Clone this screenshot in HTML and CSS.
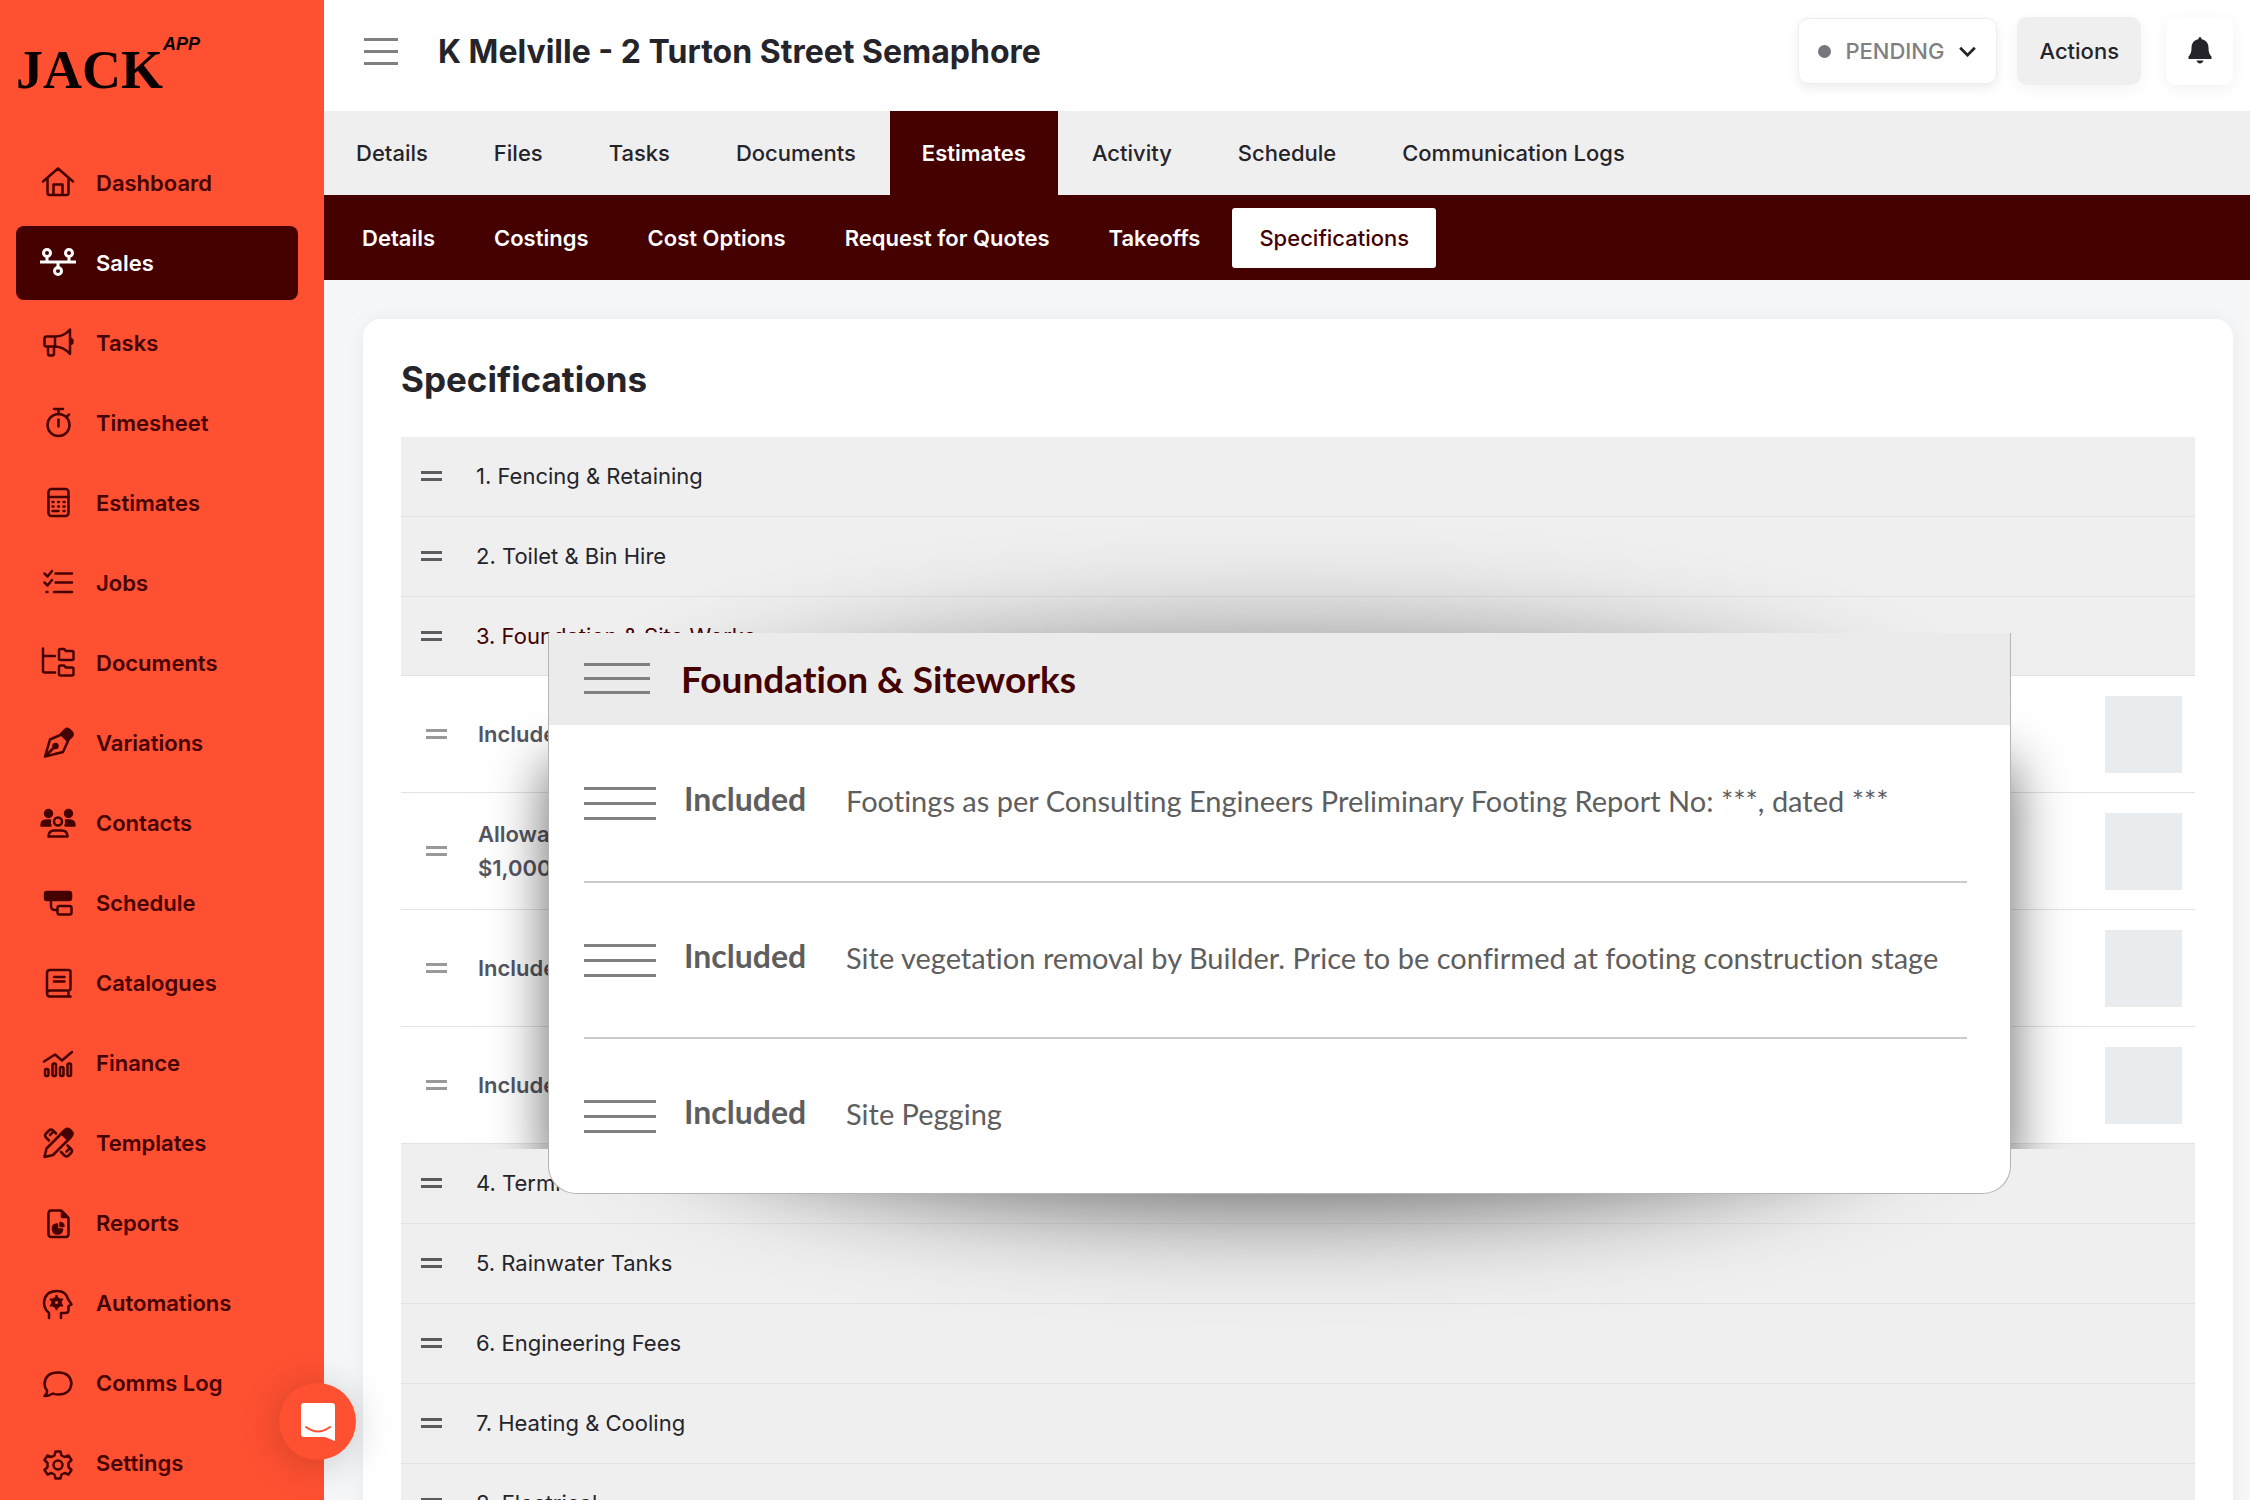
FILE: index.html
```html
<!DOCTYPE html>
<html lang="en">
  <head>
    <meta charset="UTF-8" />
    <meta name="viewport" content="width=device-width, initial-scale=1.0" />
    <title>K Melville - 2 Turton Street Semaphore</title>
    <link rel="stylesheet" href="styles.css">
  </head>
  <body>
    <div class="app">
      <aside class="sidebar">
        <a class="logo" href="#">JACK<span class="logo-app">APP</span></a>
        <nav class="side-nav">
          <a href="#">
            <svg viewBox="0 0 36 36"><path d="M3 16.5 18 3.5l15 13M7.5 13.5V28q0 2 2 2h17q2 0 2-2V13.500M13.500 30V19.500h9V30" /></svg>
            Dashboard
          </a>
          <a class="active" href="#">
            <svg viewBox="0 0 36 36"><path d="M0 17h36M7 12v5M29 12v5M18 17v6" /><circle cx="7" cy="8" r="3.500" /><circle cx="29" cy="8" r="3.500" /><circle cx="18" cy="26" r="3.500" /></svg>
            Sales
          </a>
          <a href="#">
            <svg viewBox="0 0 36 36"><path d="M15 11.500H6.500q-2 0-2 2v6q0 2 2 2H15zM15 11.500q9 0 15-7v24.500q-6-7-15-7.500M8 21.500v7q0 2 2 2h2q2 0 2-2v-7M30 14q2.500 0 2.500 2.500T30 19" /></svg>
            Tasks
          </a>
          <a href="#">
            <svg viewBox="0 0 36 36"><circle cx="18.500" cy="20" r="11" /><path d="M14 4h9M18.500 4v5M18.500 14.500v7M26.500 12l2.500-2.500" /></svg>
            Timesheet
          </a>
          <a href="#">
            <svg viewBox="0 0 36 36"><rect x="8.500" y="4" width="20" height="27" rx="3" /><path d="M8.500 12h20M12.500 17h1M18 17h1M23.500 17h1M12.500 21.500h1M18 21.500h1M23.500 21.500h1M12.500 26h6M23.500 26h1" /></svg>
            Estimates
          </a>
          <a href="#">
            <svg viewBox="0 0 36 36"><path d="m4.500 8.500 3 3L12 6M4.500 17.500l3 3L12 15M15.500 8.500H32M15.500 17.500H32M14 27h18M6.500 27h1" /></svg>
            Jobs
          </a>
          <a href="#">
            <svg viewBox="0 0 36 36"><path d="M3 3.500V26q0 1.500 1.500 1.500H15M3 11h12M19 5.500q0-1.500 1.500-1.500h3.500l2 2h6q1.500 0 1.500 1.500v6q0 1.500-1.500 1.500H20.500q-1.500 0-1.500-1.500zM19 22q0-1.500 1.500-1.500h3.500l2 2h6q1.500 0 1.500 1.500v5q0 1.500-1.500 1.500H20.500q-1.500 0-1.500-1.500z" /></svg>
            Documents
          </a>
          <a href="#">
            <svg viewBox="0 0 36 36"><path d="M5 31.500 10 14.500l11.500-5 6.500 6.500-5 11zM5 31.500l9-9" /><circle class="fill" cx="15.500" cy="21" r="2" /><path class="fill" d="m21.500 8.500 4-4q2-1.500 4 .5l2 2q2 2 .5 4l-4 4z" /></svg>
            Variations
          </a>
          <a href="#">
            <svg viewBox="0 0 36 36"><circle class="fill" cx="8.500" cy="8.500" r="3.500" /><circle class="fill" cx="28.500" cy="8.500" r="3.500" /><path class="fill" d="M1.500 20.500q0-5 5-5H10q-1 3 .5 5zM34.500 20.500q0-5-5-5H26q1 3-.5 5z" /><circle cx="18" cy="16.500" r="4" /><path d="M8.500 31.500q0-6 6-6h7q6 0 6 6z" /></svg>
            Contacts
          </a>
          <a href="#">
            <svg viewBox="0 0 36 36"><rect class="fill" x="5" y="7" width="26" height="8" rx="2" /><path d="M11 15v6q0 4 4 4h2" /><rect x="17.500" y="21" width="14" height="8.500" rx="2" /></svg>
            Schedule
          </a>
          <a href="#">
            <svg viewBox="0 0 36 36"><path d="M30.500 31.500H10q-3 0-3-3V8q0-3 3-3h18.500q2 0 2 2v16.500q0 2-2 2H10q-3 0-3 3M28.500 25.500v6M14 12h10.500M14 16.500h10.500" /></svg>
            Catalogues
          </a>
          <a href="#">
            <svg viewBox="0 0 36 36"><path d="M4 16.500 15 9.500l7 6L32 7" /><rect x="5" y="24" width="3.500" height="7" rx="1.500" /><rect x="12.500" y="18.500" width="3.500" height="12.500" rx="1.500" /><rect x="20" y="22" width="3.500" height="9" rx="1.500" /><rect x="27.500" y="18.500" width="3.500" height="12.500" rx="1.500" /></svg>
            Finance
          </a>
          <a href="#">
            <svg viewBox="0 0 36 36"><path d="m4.500 32 2-8.500L24 6l6.500 6.500L13 30zM9 15.500l-3-3q-2-2 0-4L9 5.500q2-2 4 0L16 8.500M10 10l2.500-2.500M21 27l3.500 3.500q2 2 4 0l2.500-2.500q2-2 0-4L27.500 20.500M26.500 26.500l2.500-2.500" /><path class="fill" d="m21.500 8.500 4-4q2-1.500 4 0l2 2q2 2 .5 4l-4 4z" /></svg>
            Templates
          </a>
          <a href="#">
            <svg viewBox="0 0 36 36"><path d="M11.500 5.500H21l7.500 7.500v16q0 3-3 3h-14q-3 0-3-3v-20.500q0-3 3-3z" /><path class="fill" d="M22 6.500v5.500h5.500zM17 19.500v5h5q-.5 4-4.500 4t-4.500-4.500 4-4.500zM20.500 18q2.500.5 3 3h-3z" /></svg>
            Reports
          </a>
          <a href="#">
            <svg viewBox="0 0 36 36"><path d="M9 33v-5q-5-4-5-10.500Q5 6 17 6q9 0 11 8l3.500 5.500-3 1.500v4q0 3-3 3H21v5" /><circle class="thick" cx="16.500" cy="17.500" r="3.500" /><path d="M16.500 11v2.500M16.500 21.500V24M11 14.500l2 1M20 19.500l2 1M11 20.500l2-1M20 15.500l2-1" /></svg>
            Automations
          </a>
          <a href="#">
            <svg viewBox="0 0 36 36"><path d="M4.500 31q3-2.500 2.500-5.500-2.500-3-2.500-7Q5.500 7.500 18 7.500t13.500 11q-1 11-13.500 11-3 0-5-1-4 2.500-8.500 2.500z" /></svg>
            Comms Log
          </a>
          <a href="#">
            <svg viewBox="0 0 36 36"><path d="M15.500 6.500h5l1 4 3 1.500 4-1.500 3 4.500-3 3v4l3 3-3 4.500-4-1.500-3 1.500-1 4h-5l-1-4-3-1.500-4 1.500-3-4.500 3-3v-4l-3-3 3-4.500 4 1.500 3-1.500z" /><circle cx="18" cy="20" r="4.500" /></svg>
            Settings
          </a>
        </nav>
      </aside>

      <main class="main">
        <header class="topbar">
          <button class="menu-btn" aria-label="Toggle menu"><span class="bars"></span></button>
          <h1>K Melville - 2 Turton Street Semaphore</h1>
          <div class="topbar-actions">
            <label class="status">
              <span class="dot"></span>
              <select aria-label="Status">
                <option>PENDING</option>
              </select>
              <svg class="chevron" viewBox="0 0 20 12"><path d="m2 2 8 8 8-8" /></svg>
            </label>
            <button class="actions-btn">Actions</button>
            <button class="bell-btn" aria-label="Notifications">
              <svg viewBox="0 0 24 28"><path d="M12 0q1.500 0 1.500 2 7 1.500 7 9 0 6 3 8.500v2.500H.5v-2.500q3-2.500 3-8.500 0-7.500 7-9 0-2 1.500-2zM8.500 23.500h7q-1 3-3.500 3t-3.500-3z" /></svg>
            </button>
          </div>
        </header>

        <nav class="tabs">
          <a href="#">Details</a>
          <a href="#">Files</a>
          <a href="#">Tasks</a>
          <a href="#">Documents</a>
          <a class="active" href="#">Estimates</a>
          <a href="#">Activity</a>
          <a href="#">Schedule</a>
          <a href="#">Communication Logs</a>
        </nav>
        <nav class="sub-tabs">
          <a href="#">Details</a>
          <a href="#">Costings</a>
          <a href="#">Cost Options</a>
          <a href="#">Request for Quotes</a>
          <a href="#">Takeoffs</a>
          <a class="active" href="#">Specifications</a>
        </nav>

        <section class="card">
          <h2>Specifications</h2>
          <div class="spec-list">
            <div class="group"><span class="handle"></span>1. Fencing &amp; Retaining</div>
            <div class="group"><span class="handle"></span>2. Toilet &amp; Bin Hire</div>
            <div class="group open"><span class="handle"></span>3. Foundation &amp; Site Works</div>
            <div class="item"><span class="handle"></span><p>Included</p><span class="thumb"></span></div>
            <div class="item"><span class="handle"></span><p>Allowance<br>$1,000</p><span class="thumb"></span></div>
            <div class="item"><span class="handle"></span><p>Included</p><span class="thumb"></span></div>
            <div class="item"><span class="handle"></span><p>Included</p><span class="thumb"></span></div>
            <div class="group"><span class="handle"></span>4. Termite</div>
            <div class="group"><span class="handle"></span>5. Rainwater Tanks</div>
            <div class="group"><span class="handle"></span>6. Engineering Fees</div>
            <div class="group"><span class="handle"></span>7. Heating &amp; Cooling</div>
            <div class="group"><span class="handle"></span>8. Electrical</div>

            <!-- enlarged view of group 3 -->
            <div class="popout">
              <div class="shadow-top"></div>
              <div class="shadow-bottom"></div>
              <div class="shadow-sides"></div>
              <div class="popout-body">
                <h3><span class="bars wide"></span>Foundation &amp; Siteworks</h3>
                <div class="popout-row">
                  <span class="bars wider"></span>
                  <strong>Included</strong>
                  <p>Footings as per Consulting Engineers Preliminary Footing Report No: ***, dated ***</p>
                </div>
                <div class="popout-row">
                  <span class="bars wider"></span>
                  <strong>Included</strong>
                  <p>Site vegetation removal by Builder. Price to be confirmed at footing construction stage</p>
                </div>
                <div class="popout-row">
                  <span class="bars wider"></span>
                  <strong>Included</strong>
                  <p>Site Pegging</p>
                </div>
              </div>
            </div>
          </div>
        </section>
      </main>

      <button class="chat" aria-label="Open chat">
        <svg viewBox="0 0 36 40"><path class="bubble" d="M4 1h28q3 0 3 3v35l-10-4H4q-3 0-3-3V4q0-3 3-3z" /><path class="smile" d="M6 25q12 9 24 0" /></svg>
      </button>
    </div>
  </body>
</html>
```
FILE: styles.css
```css
*,
*::before,
*::after {
  box-sizing: border-box;
}

:root {
  --orange: #ff5032;
  --maroon: #450000;
  --grey: #efefef;
  --line: #dfe3e8;
  --text: #25242a;
}

body {
  margin: 0;
  font-family: Inter, "Liberation Sans", sans-serif;
  font-size: 22px;
  color: var(--text);
}

h1,
h2,
h3,
p {
  margin: 0;
}

a {
  color: inherit;
  text-decoration: none;
}

button,
select {
  border: 0;
  padding: 0;
  font: inherit;
  color: inherit;
  background: none;
}

.app {
  display: flex;
  height: 100vh;
  overflow: hidden;
}

/* sidebar */
.sidebar {
  flex: 0 0 324px;
  background: var(--orange);
  color: var(--maroon);
}

.logo {
  display: flex;
  align-items: flex-start;
  height: 146px;
  padding: 32px 16px 0;
  font-family: "Liberation Serif", serif;
  font-size: 54px;
  line-height: 76px;
  font-weight: 700;
  color: #0a0000;
}

.logo-app {
  font-family: "Liberation Sans Narrow", "Liberation Sans", sans-serif;
  font-size: 18px;
  line-height: 24px;
  font-style: italic;
}

.side-nav {
  display: flex;
  flex-direction: column;
  gap: 6px;
  padding: 0 26px 0 16px;
}

.side-nav a {
  display: flex;
  align-items: center;
  gap: 20px;
  height: 74px;
  padding-left: 24px;
  border-radius: 8px;
  font-weight: 600;
}

.side-nav .active {
  background: var(--maroon);
  color: #fff;
}

.side-nav svg {
  width: 36px;
  height: 36px;
  fill: none;
  stroke: currentColor;
  stroke-width: 2.5;
  stroke-linecap: round;
  stroke-linejoin: round;
}

.side-nav .active svg {
  stroke-width: 3;
}

.side-nav svg .fill {
  fill: currentColor;
}

.side-nav svg .thick {
  stroke-width: 4;
}

/* top bar */
.main {
  flex: 1;
  min-width: 0;
  background: #f6f7f9;
}

.topbar {
  display: flex;
  align-items: center;
  gap: 40px;
  height: 111px;
  padding: 0 17px 9px 40px;
  background: #fff;
}

.topbar h1 {
  flex: 1;
  font-size: 32px;
  font-weight: 700;
}

.bars {
  display: block;
  width: 34px;
  height: 27px;
  border-top: 3px solid #808080;
  border-bottom: 3px solid #808080;
  background: linear-gradient(#808080, #808080) center / 100% 3px no-repeat;
}

.topbar-actions {
  display: flex;
  align-items: center;
}

.status {
  display: flex;
  align-items: center;
  gap: 14px;
  height: 66px;
  margin-right: 20px;
  padding: 0 19px;
  border: 1px solid #ededed;
  border-radius: 10px;
  box-shadow: 0 4px 12px rgba(0, 0, 0, 0.08);
}

.status select {
  appearance: none;
  color: #808080;
  font-weight: 500;
}

.dot {
  width: 13px;
  height: 13px;
  border-radius: 50%;
  background: #77767c;
}

.chevron {
  width: 19px;
  height: 11px;
  fill: none;
  stroke: var(--text);
  stroke-width: 3;
}

.actions-btn {
  height: 68px;
  margin-right: 25px;
  padding: 0 22px;
  border-radius: 10px;
  background: var(--grey);
  font-weight: 500;
  box-shadow: 0 4px 16px rgba(0, 0, 0, 0.05);
}

.bell-btn {
  display: flex;
  align-items: center;
  justify-content: center;
  width: 67px;
  height: 68px;
  border-radius: 10px;
  box-shadow: 0 4px 16px rgba(0, 0, 0, 0.06);
}

.bell-btn svg {
  width: 24px;
  height: 28px;
  fill: var(--text);
}

/* tabs */
.tabs {
  display: flex;
  gap: 2px;
  height: 84px;
  background: var(--grey);
  font-weight: 500;
}

.tabs a {
  display: flex;
  align-items: center;
  padding: 0 32px;
}

.tabs .active {
  background: var(--maroon);
  color: #fff;
  font-weight: 600;
}

.sub-tabs {
  display: flex;
  align-items: center;
  gap: 5px;
  height: 85px;
  padding: 0 11px;
  background: var(--maroon);
  color: #fff;
  font-weight: 600;
}

.sub-tabs a {
  padding: 0 27px;
  line-height: 60px;
}

.sub-tabs .active {
  border-radius: 3px;
  background: #fff;
  color: var(--maroon);
  font-weight: 500;
}

/* specifications */
.card {
  margin: 39px 17px 0 39px;
  padding: 36px 38px;
  border-radius: 18px;
  background: #fff;
  box-shadow: 0 0 20px rgba(0, 0, 0, 0.06);
}

.card h2 {
  margin-bottom: 34px;
  font-size: 35px;
  line-height: 48px;
  font-weight: 700;
}

.spec-list {
  position: relative;
}

.group,
.item {
  display: flex;
  align-items: center;
  border-bottom: 1px solid var(--line);
}

.group {
  gap: 34px;
  height: 80px;
  padding: 0 20px 1px;
  background: var(--grey);
}

.group.open {
  height: 79px;
  color: var(--maroon);
}

.item {
  gap: 31px;
  height: 117px;
  padding: 0 13px 0 25px;
  color: #55555f;
  font-weight: 600;
  line-height: 34px;
}

.handle {
  width: 21px;
  height: 10px;
  border-top: 3px solid #5a5a60;
  border-bottom: 3px solid #5a5a60;
}

.item .handle {
  border-color: #999;
}

.thumb {
  width: 77px;
  height: 77px;
  margin-left: auto;
  background: #e9ecef;
}

/* popout */
.popout {
  position: absolute;
  top: 196px;
  left: 147px;
  right: 184px;
  font-family: Lato, "Open Sans", sans-serif;
  font-variant-ligatures: none;
  color: #5e5e5e;
}

.popout-body {
  position: relative;
  border: 1px solid #b4b4b4;
  border-top: 0;
  border-radius: 0 0 28px 28px;
  background: #fff;
}

.shadow-top,
.shadow-bottom {
  position: absolute;
  left: 8%;
  right: 8%;
  height: 240px;
  border-radius: 50%;
}

.shadow-top {
  top: 10px;
  box-shadow: 0 0 110px rgba(0, 0, 0, 0.45);
}

.shadow-bottom {
  bottom: 4px;
  box-shadow: 0 6px 110px rgba(0, 0, 0, 0.7);
}

.shadow-sides {
  position: absolute;
  inset: 100px 0 45px;
  clip-path: inset(-80px -80px 0);
  box-shadow: 0 30px 52px rgba(0, 0, 0, 0.6);
}

.popout h3 {
  display: flex;
  align-items: center;
  gap: 31px;
  height: 92px;
  padding: 0 35px 2px;
  background: #ebebeb;
  color: var(--maroon);
  font-size: 37px;
}

.popout-row {
  display: flex;
  align-items: center;
  height: 156px;
  margin: 0 43px 0 35px;
}

.popout-row + .popout-row {
  border-top: 2px solid #cacaca;
}

.popout-row strong {
  width: 162px;
  margin: 0 0 10px 28px;
  font-size: 32px;
}

.popout-row p {
  margin-bottom: 6px;
  font-size: 29px;
  white-space: nowrap;
}

.bars.wide {
  width: 66px;
  height: 31px;
}

.bars.wider {
  width: 72px;
  height: 33px;
}

/* chat launcher */
.chat {
  position: fixed;
  left: 279px;
  bottom: 40px;
  display: flex;
  align-items: center;
  justify-content: center;
  width: 77px;
  height: 77px;
  border-radius: 50%;
  background: var(--orange);
  box-shadow: 0 4px 40px rgba(0, 0, 0, 0.2);
}

.chat svg {
  width: 36px;
  height: 40px;
}

.bubble {
  fill: #fff;
}

.smile {
  fill: none;
  stroke: var(--orange);
  stroke-width: 2;
  stroke-linecap: round;
}
```
